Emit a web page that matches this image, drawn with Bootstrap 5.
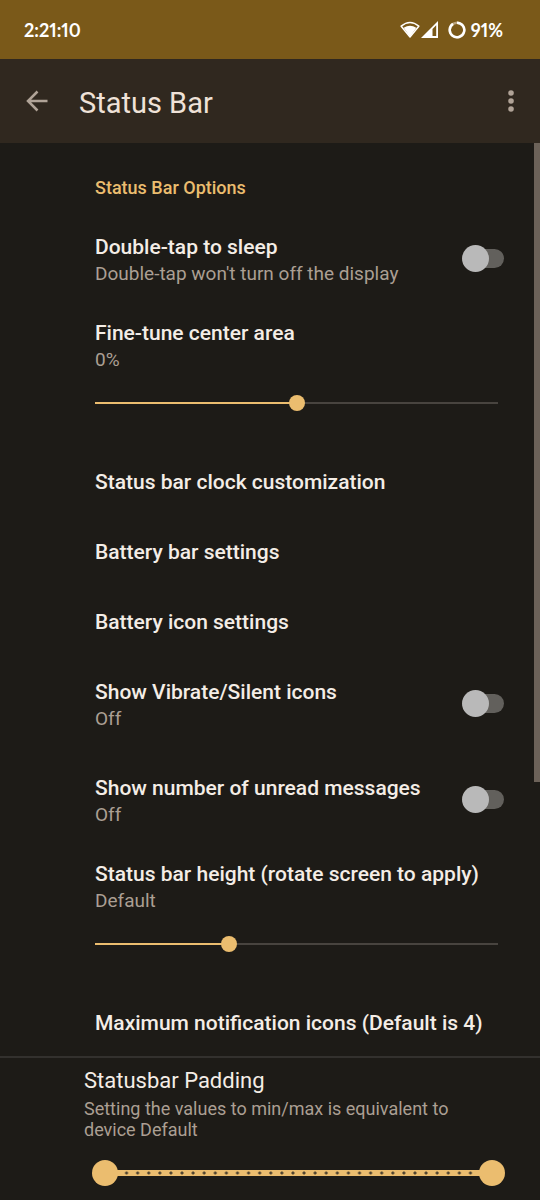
<!DOCTYPE html>
<html lang="en" data-bs-theme="dark">
<head>
<meta charset="utf-8">
<meta name="viewport" content="width=device-width, initial-scale=1">
<title>Status Bar</title>
<link href="https://cdn.jsdelivr.net/npm/bootstrap@5.3.0/dist/css/bootstrap.min.css" rel="stylesheet">
<style>
  :root { --accent: #ebbd6f; --ink: #f4ede6; --muted: #ab9f93; --page: #1d1b17; }
  body { background: var(--page); color: var(--ink); font-family: Roboto, "Liberation Sans", sans-serif; }
  a { color: inherit; }
  .system-bar { background: #7a5919; color: #fff; height: 59px; padding: 0 37px 0 24px; font: 700 18px/24px Lato, sans-serif; font-variant-numeric: proportional-nums; }
  .status-icons { gap: 1px; }
  .app-bar { background: #30281f; height: 84px; padding: 0 17px 0 25px; }
  .app-title { font-size: 29px; line-height: 36px; font-weight: 400; padding: 3px 0 0 6px; color: #efe2d8; }
  .icon-btn { color: #b0a397; }
  .prefs { padding-left: 95px; padding-right: 36px; }
  .section-title { color: var(--accent); font-size: 18px; line-height: 24px; font-weight: 500; padding: 33px 0 12px; }
  .pref { padding: 21px 0; }
  .pref-slider { padding: 11px 6px 36px 0; }
  .pref-title { font-size: 21px; line-height: 28px; font-weight: 500; }
  .pref-note { color: var(--muted); font-size: 19px; line-height: 26px; }

  .toggle { appearance: none; display: grid; align-items: center; width: 42px; height: 27px; margin: 0 0 4px; cursor: pointer; }
  .toggle::before, .toggle::after { content: ""; grid-area: 1 / 1; }
  .toggle::before { width: 37px; height: 19px; border-radius: 10px; background: #62605c; justify-self: end; }
  .toggle::after { width: 27px; height: 27px; border-radius: 50%; background: #b9b9b9; }
  .toggle:checked::after { background: var(--accent); justify-self: end; }

  .slider { appearance: none; display: block; height: 16px; width: calc(100% + 16px); margin: 22px -8px 0;
    background:
      linear-gradient(var(--accent), var(--accent)) 8px 50% / calc((100% - 16px) * var(--fill)) 2px no-repeat,
      linear-gradient(#48443f, #48443f) 8px 50% / calc(100% - 16px) 2px no-repeat; }
  .slider::-webkit-slider-thumb { appearance: none; width: 16px; height: 16px; border-radius: 50%; background: var(--accent); }

  .padding-panel { border-top: 2px solid #33312e; padding: 9px 35px 14px 84px; }
  .panel-title { font-size: 22px; line-height: 28px; font-weight: 400; color: var(--ink); }
  .panel-note { color: var(--muted); font-size: 18px; line-height: 21px; padding-top: 3px; max-width: 400px; }
  .range-pair { margin: 20px 0 0 8px; }
  .range-pair > * { grid-area: 1 / 1; }
  .range-line { height: 6px; margin: 0 13px; padding: 0 16px; background: var(--accent); }
  .range-ticks { height: 6px; background: radial-gradient(circle, #4d422f 1px, transparent 2px) 0 50% / calc(100% / 32) 6px; }
  .range-end { appearance: none; width: 100%; height: 26px; margin: 0; background: none; pointer-events: none; }
  .range-end::-webkit-slider-thumb { appearance: none; pointer-events: auto; width: 26px; height: 26px; border-radius: 50%; background: var(--accent); }

  .last-pref { padding-bottom: 19px; }
  .scroll-thumb { width: 6px; height: 60.5%; background: #6c6259; }
</style>
</head>
<body>
<div class="system-bar d-flex align-items-center justify-content-between">
  <span>2:21:10</span>
  <span class="status-icons d-flex align-items-center">
    <svg width="20" height="18" viewBox="0 0 20 18" fill="none" aria-hidden="true">
      <path d="M1.200 5.200Q10-2 18.800 5.200L10 16Z" stroke="#fff" stroke-width="1.500" stroke-linejoin="round"/>
      <path d="M3.700 6.800Q10 2.800 16.300 6.800L10 15.800Z" fill="#fff"/>
    </svg>
    <svg width="18" height="18" viewBox="0 0 18 18" aria-hidden="true">
      <path fill="#fff" fill-rule="evenodd" d="M0 17 17 0V17ZM11.500 8V15H15.200V4.300Z"/>
    </svg>
    <svg class="ms-2" width="18" height="18" viewBox="0 0 18 18" fill="none" stroke-width="2.500" aria-hidden="true">
      <circle cx="9" cy="9" r="7.300" stroke="#b9a37d"/>
      <path d="M9 1.700A7.300 7.300 0 1 1 5 2.900" stroke="#fff"/>
    </svg>
    <span class="ps-1">91%</span>
  </span>
</div>

<header class="app-bar d-flex align-items-center">
  <button type="button" class="btn icon-btn border-0 p-0 d-flex" aria-label="Back">
    <svg width="24" height="24" viewBox="0 0 24 24" fill="none" stroke="currentColor" stroke-width="2.500"><path d="M22.500 12H3.500M12.500 2.500 3 12 12.500 21.500"/></svg>
  </button>
  <h1 class="app-title flex-grow-1 mb-0 ms-4">Status Bar</h1>
  <button type="button" class="btn icon-btn border-0 p-0 d-flex" aria-label="More options">
    <svg width="24" height="24" viewBox="0 0 24 24" fill="currentColor"><circle cx="12" cy="4" r="2.800"/><circle cx="12" cy="12" r="2.800"/><circle cx="12" cy="20" r="2.800"/></svg>
  </button>
</header>

<main class="position-relative">
  <div class="prefs">
    <h2 class="section-title mb-0">Status Bar Options</h2>

    <div class="pref d-flex align-items-center justify-content-between">
      <label for="sleep"><span class="pref-title d-block">Double-tap to sleep</span><span class="pref-note d-block">Double-tap won't turn off the display</span></label>
      <input class="toggle flex-shrink-0" type="checkbox" role="switch" id="sleep">
    </div>

    <div class="pref-slider">
      <label class="pref-title d-block" for="center">Fine-tune center area</label>
      <div class="pref-note">0%</div>
      <input class="slider" type="range" id="center" min="-50" max="50" value="0" style="--fill: .5">
    </div>

    <a class="pref pref-title d-block text-decoration-none" href="#clock">Status bar clock customization</a>
    <a class="pref pref-title d-block text-decoration-none" href="#battery-bar">Battery bar settings</a>
    <a class="pref pref-title d-block text-decoration-none" href="#battery-icon">Battery icon settings</a>

    <div class="pref d-flex align-items-center justify-content-between">
      <label for="vibrate"><span class="pref-title d-block">Show Vibrate/Silent icons</span><span class="pref-note d-block">Off</span></label>
      <input class="toggle flex-shrink-0" type="checkbox" role="switch" id="vibrate">
    </div>
    <div class="pref d-flex align-items-center justify-content-between">
      <label for="unread"><span class="pref-title d-block">Show number of unread messages</span><span class="pref-note d-block">Off</span></label>
      <input class="toggle flex-shrink-0" type="checkbox" role="switch" id="unread">
    </div>

    <div class="pref-slider">
      <label class="pref-title d-block" for="height">Status bar height (rotate screen to apply)</label>
      <div class="pref-note">Default</div>
      <input class="slider" type="range" id="height" min="0" max="3" value="1" style="--fill: .3333">
    </div>

    <a class="pref last-pref pref-title d-block text-decoration-none" href="#max-icons">Maximum notification icons (Default is 4)</a>
  </div>

  <section class="padding-panel">
    <h2 class="panel-title mb-0">Statusbar Padding</h2>
    <p class="panel-note mb-0">Setting the values to min/max is equivalent to device Default</p>
    <div class="range-pair d-grid align-items-center">
      <div class="range-line"><div class="range-ticks"></div></div>
      <input class="range-end" type="range" min="0" max="35" value="0" aria-label="Left padding">
      <input class="range-end" type="range" min="0" max="35" value="35" aria-label="Right padding">
    </div>
  </section>
  <div class="scroll-thumb position-absolute top-0 end-0"></div>
</main>
<script src="https://cdn.jsdelivr.net/npm/bootstrap@5.3.0/dist/js/bootstrap.bundle.min.js"></script>
</body>
</html>
